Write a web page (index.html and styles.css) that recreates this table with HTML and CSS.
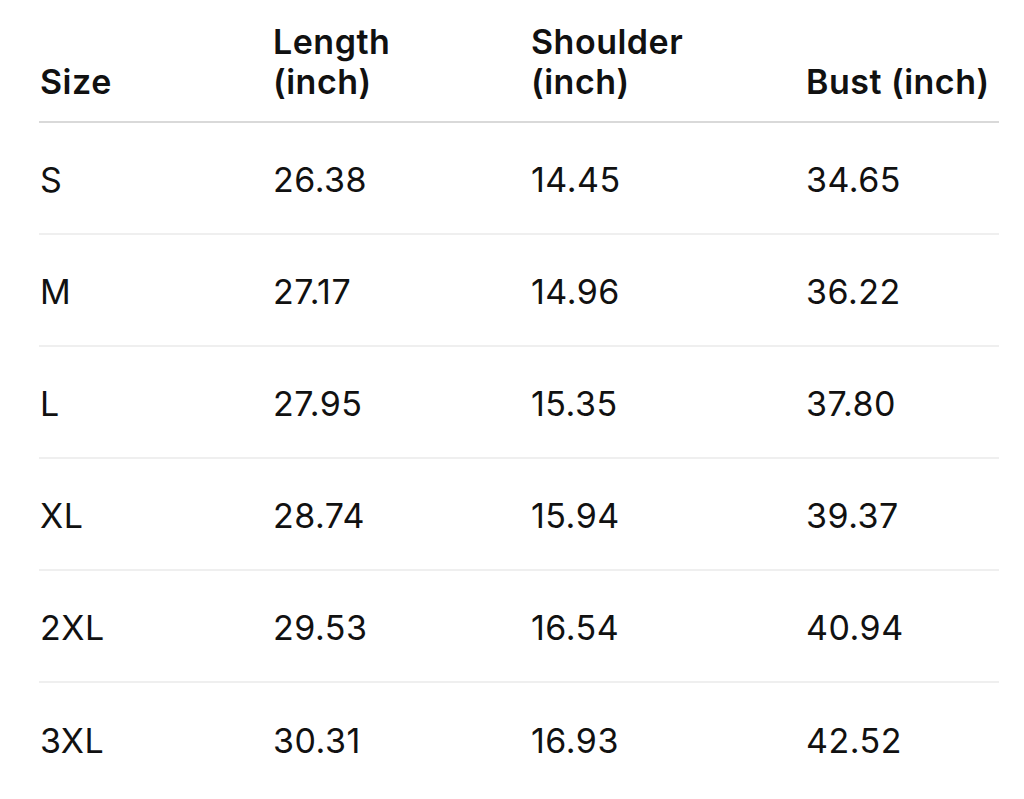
FILE: index.html
```html
<!DOCTYPE html>
<html>
<head>
<meta charset="utf-8">
<link rel="stylesheet" href="styles.css">
</head>
<body>
<table class="size-table">
  <colgroup>
    <col class="c1"><col class="c2"><col class="c3"><col class="c4">
  </colgroup>
  <thead>
    <tr><th>Size</th><th>Length<br>(inch)</th><th>Shoulder<br>(inch)</th><th>Bust (inch)</th></tr>
  </thead>
  <tbody>
    <tr><td>S</td><td>26.38</td><td>14.45</td><td>34.65</td></tr>
    <tr><td>M</td><td>27.17</td><td>14.96</td><td>36.22</td></tr>
    <tr><td>L</td><td>27.95</td><td>15.35</td><td>37.80</td></tr>
    <tr><td>XL</td><td>28.74</td><td>15.94</td><td>39.37</td></tr>
    <tr><td>2XL</td><td>29.53</td><td>16.54</td><td>40.94</td></tr>
    <tr><td>3XL</td><td>30.31</td><td>16.93</td><td>42.52</td></tr>
  </tbody>
</table>
</body>
</html>
```
FILE: styles.css
```css
html, body {
  margin: 0;
  padding: 0;
  background: #ffffff;
}
body {
  padding-left: 39px;
  font-family: Inter, "Noto Sans", sans-serif;
  color: #111111;
}
.size-table {
  width: 960px;
  border-collapse: collapse;
  table-layout: fixed;
}
.c1 { width: 233px; }
.c2 { width: 258px; }
.c3 { width: 275px; }
.c4 { width: 194px; }
.size-table th {
  text-align: left;
  font-weight: 600;
  font-size: 34px;
  letter-spacing: 0.5px;
  line-height: 40px;
  vertical-align: bottom;
  height: 122px;
  padding: 0 0 19px 1px;
  box-sizing: border-box;
  border-bottom: 2px solid #d9d9d9;
  white-space: nowrap;
}
.size-table td {
  font-size: 34px;
  letter-spacing: 0.5px;
  line-height: 40px;
  height: 112px;
  padding: 4px 0 0 1px;
  box-sizing: border-box;
  vertical-align: middle;
  border-bottom: 2px solid #efefef;
}
.size-table tbody tr:last-child td {
  border-bottom: none;
}
```
